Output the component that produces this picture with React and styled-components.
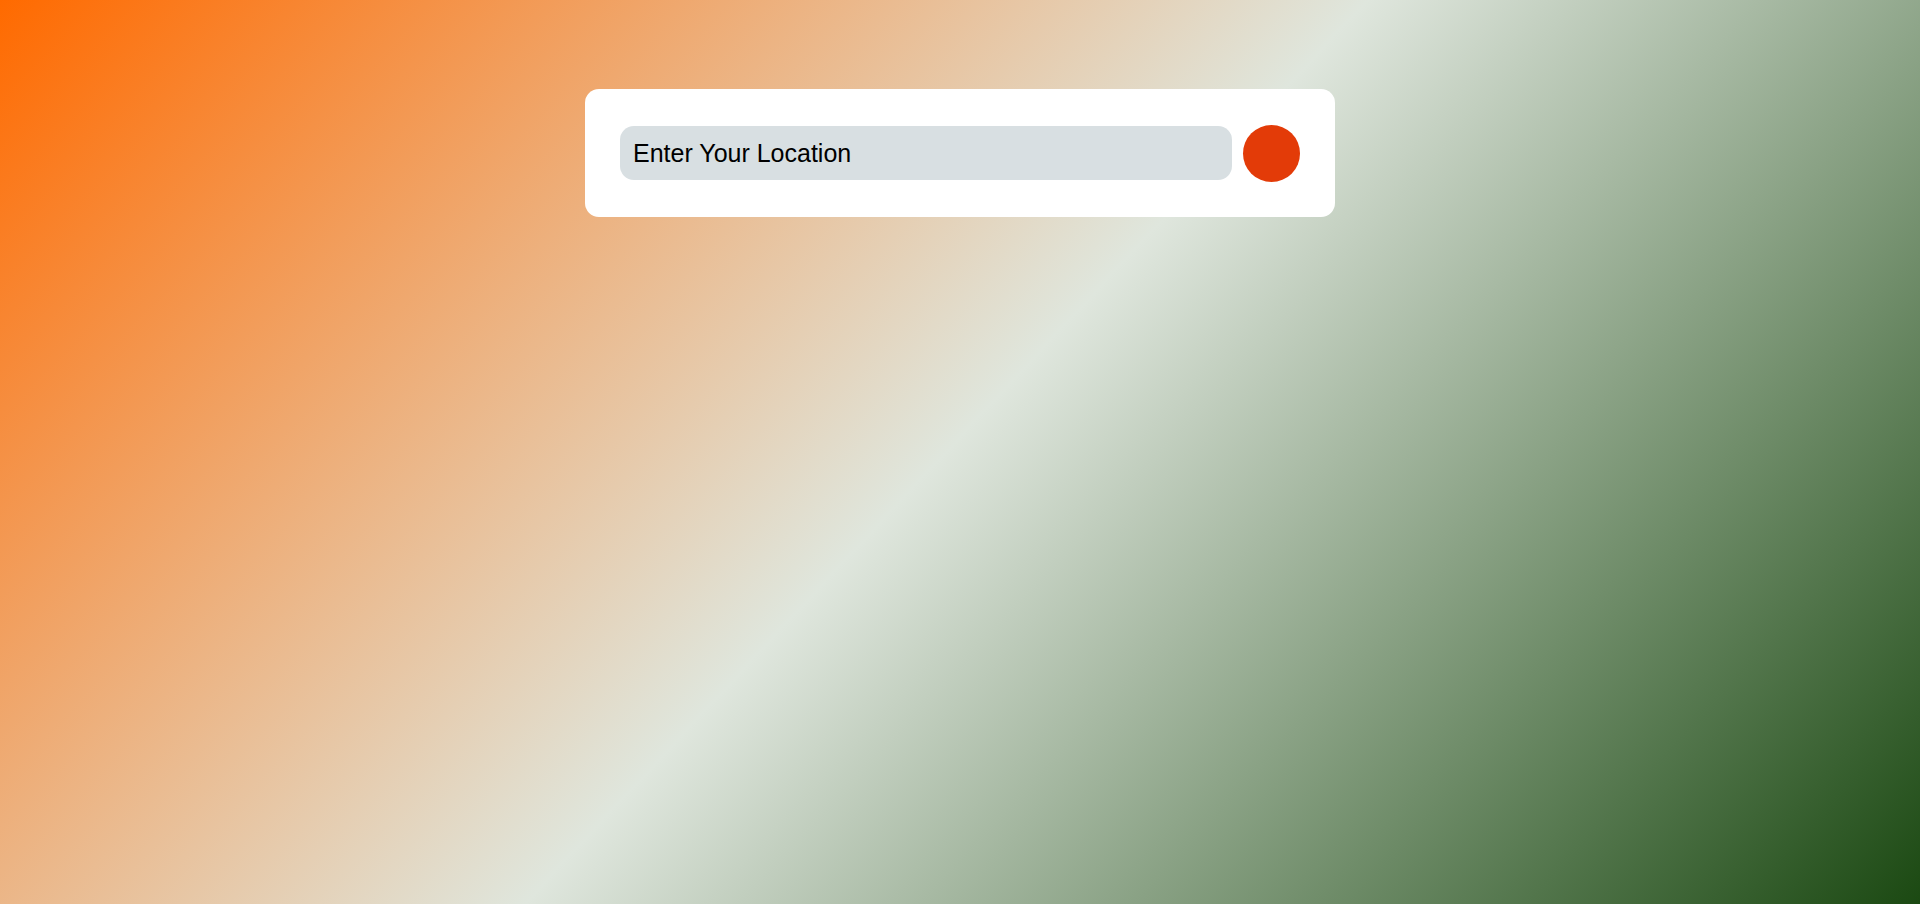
import React from "react";
import styled, { createGlobalStyle } from "styled-components";

const GlobalStyle = createGlobalStyle`
  * {
    box-sizing: border-box;
  }
  body {
    margin: 0;
    font-family: "Liberation Sans", Arial, sans-serif;
  }
`;

const Page = styled.div`
  min-height: 100vh;
  background: linear-gradient(133deg, #ff6a00 0%, #dfe6dd 49.5%, #1b4912 100%);
  display: flex;
  justify-content: center;
  align-items: flex-start;
  padding-top: 89px;
`;

const Card = styled.div`
  width: 750px;
  height: 128px;
  background-color: white;
  border-radius: 14px;
  padding: 0 35px;
  display: flex;
  align-items: center;
  gap: 11px;
`;

const SearchInput = styled.input`
  flex: 1;
  height: 54px;
  border: none;
  outline: none;
  border-radius: 14px;
  background-color: #d8dfe2;
  padding: 0 13px;
  font-size: 25px;
  font-family: "Liberation Sans", Arial, sans-serif;
  color: #000;
  &::placeholder {
    color: #000;
  }
`;

const SearchButton = styled.button`
  width: 57px;
  height: 57px;
  border: none;
  outline: none;
  border-radius: 50%;
  background-color: #e33b08;
  cursor: pointer;
  flex-shrink: 0;
`;

export default function App() {
  return (
    <>
      <GlobalStyle />
      <Page>
        <Card>
          <SearchInput type="text" placeholder="Enter Your Location" />
          <SearchButton />
        </Card>
      </Page>
    </>
  );
}
